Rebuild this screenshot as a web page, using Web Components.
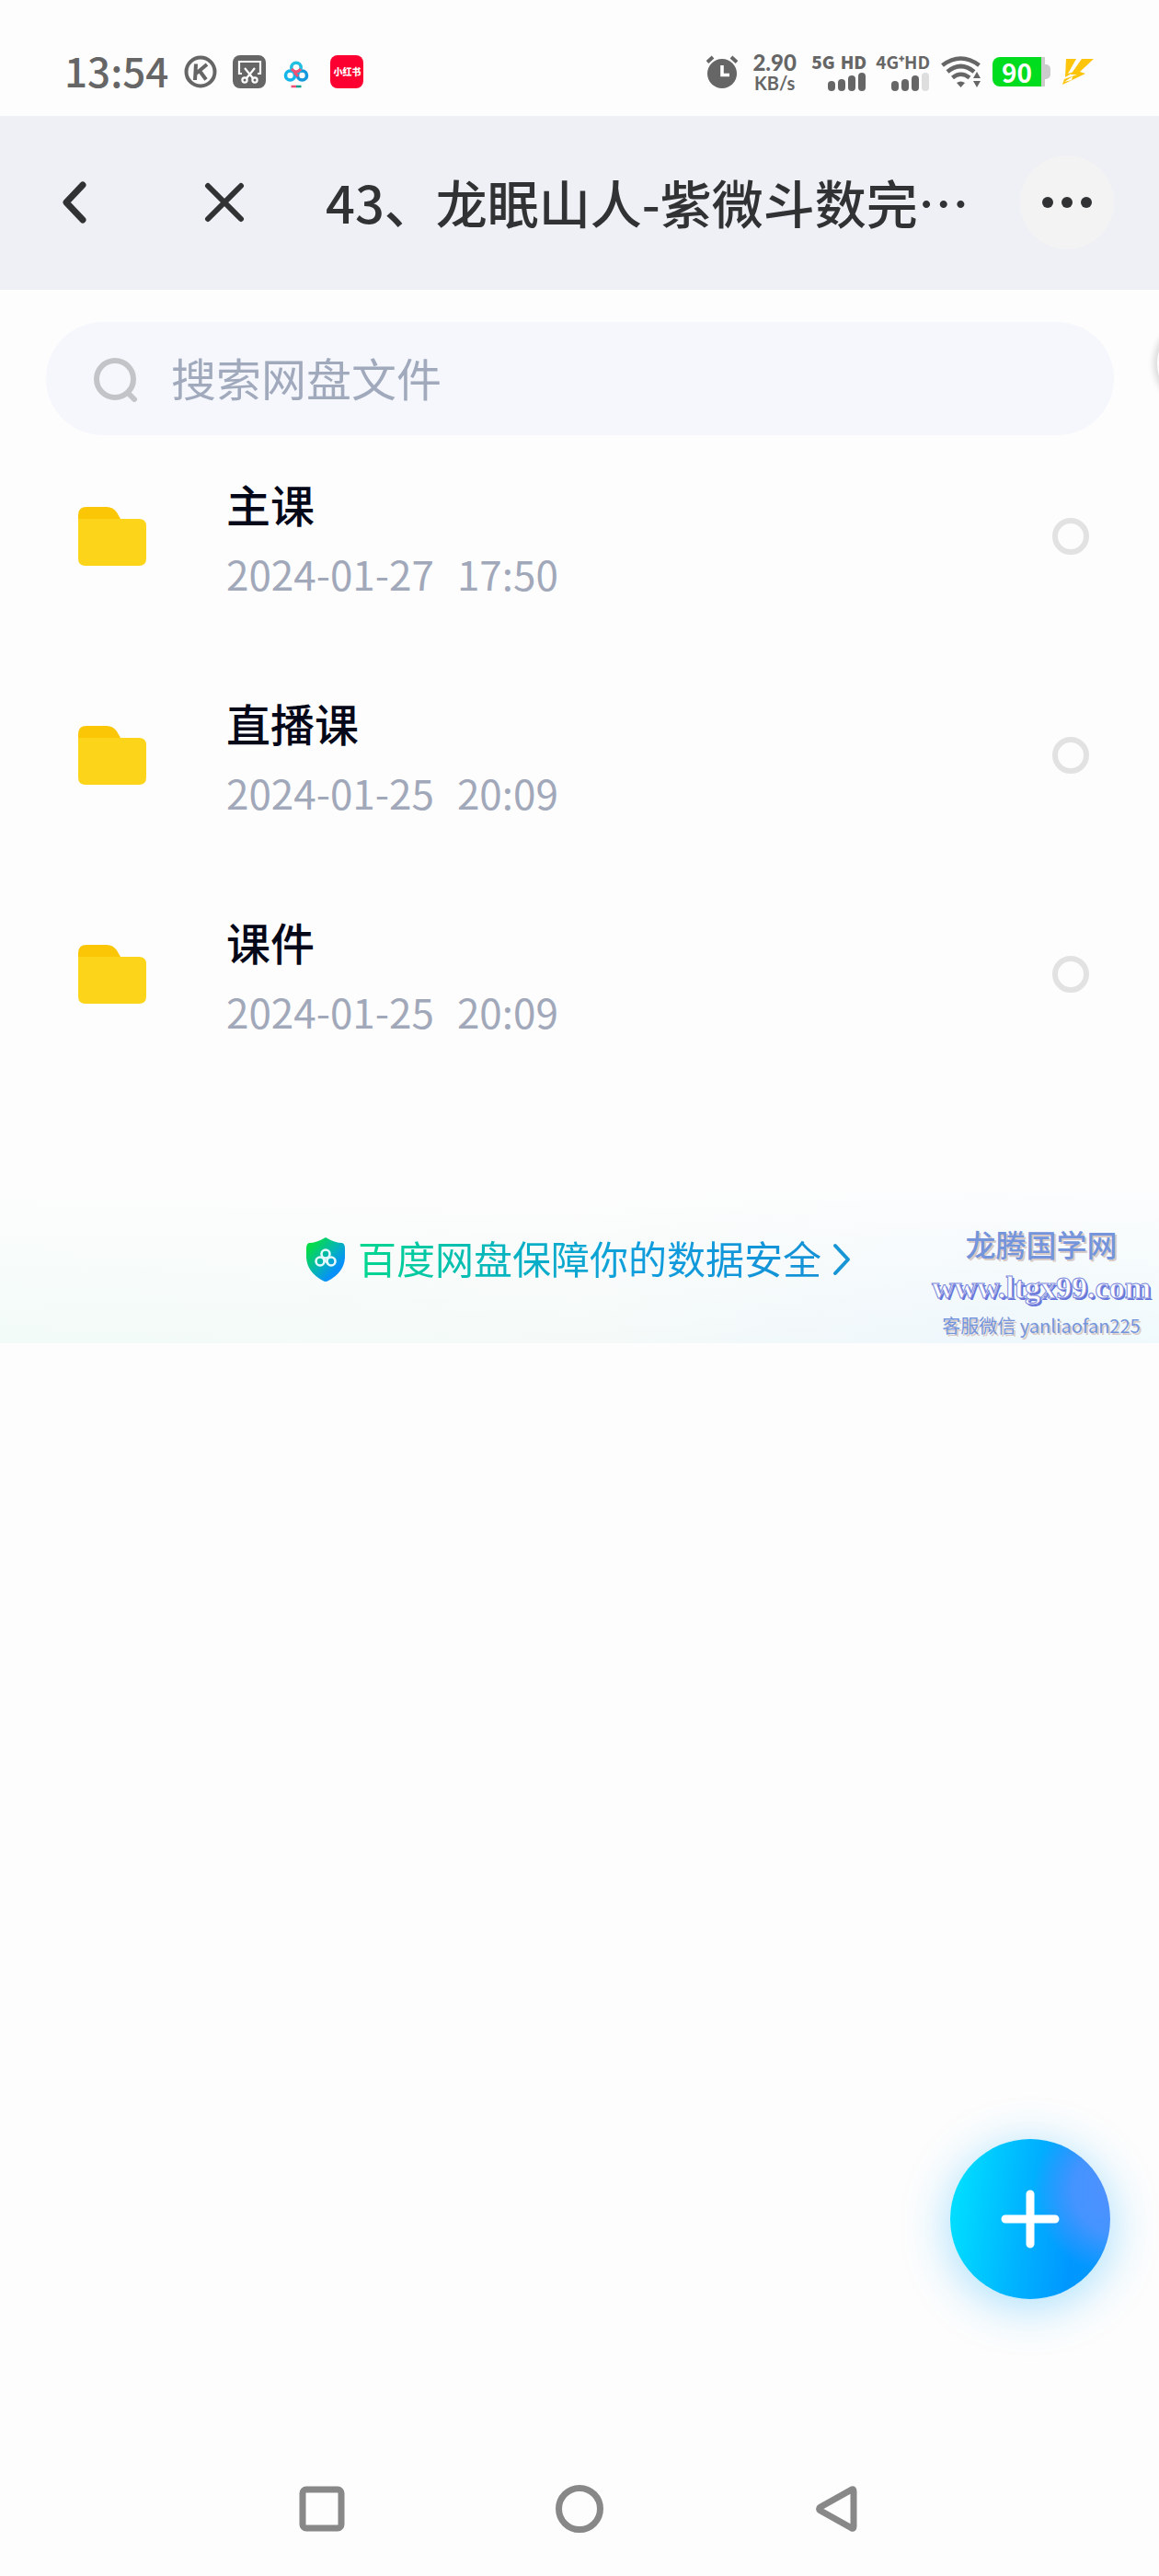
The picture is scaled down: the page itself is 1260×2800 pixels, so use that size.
<!DOCTYPE html>
<html lang="zh-CN">
<head>
<meta charset="utf-8">
<meta name="viewport" content="width=device-width, initial-scale=1">
<title>网盘文件</title>
<style>
  body { margin: 0; background: #fdfdfd; font-family: "Noto Sans CJK SC", sans-serif; }
</style>
</head>
<body>
<disk-app></disk-app>
<script>
const define = (name, html) => {
  const template = document.createElement('template');
  template.innerHTML = html;
  customElements.define(name, class extends HTMLElement {
    constructor() {
      super();
      this.attachShadow({ mode: 'open' }).append(template.content.cloneNode(true));
    }
  });
};

define('signal-meter', `
<style>
  :host { display: flex; flex-direction: column; align-items: flex-end; gap: 3px; }
  span { display: flex; gap: 6px; font-size: 19px; line-height: 18px; font-weight: 700; }
  svg { display: block; }
  :host([weak]) rect:last-child { fill: #dedede; }
</style>
<span><slot></slot></span>
<svg width="42" height="20" fill="#666" aria-hidden="true">
  <rect x="0" y="9" width="8" height="11" rx="4"/><rect x="11" y="7" width="8" height="13" rx="4"/>
  <rect x="22" y="3" width="8" height="17" rx="4"/><rect x="33" y="0" width="8" height="20" rx="4"/>
</svg>`);

define('status-bar', `
<style>
  :host { display: flex; justify-content: space-between; align-items: center; height: 126px; padding: 30px 68px 0 70px; box-sizing: border-box; color: #666; }
  div { display: flex; align-items: center; }
  .left { gap: 17px; }
  time { font-size: 44px; line-height: 48px; font-weight: 500; padding-bottom: 4px; }
  .right { gap: 12px; }
  .speed { flex-direction: column; min-width: 56px; font-family: Lato, sans-serif; font-weight: 700; }
  .speed b { font-size: 24px; line-height: 24px; }
  .speed i { font-size: 20px; line-height: 20px; font-style: normal; }
  .radios { gap: 10px; }
  svg { display: block; }
  .battery { color: #fff; font-size: 28px; line-height: 32px; font-weight: 700; background: #00dc1e; border-radius: 8px 0 0 8px; border-right: 4px solid #ccc; width: 53px; justify-content: center; height: 32px; }
  .cap { width: 6px; height: 16px; background: #ccc; border-radius: 0 5px 5px 0; }
  .xhs { width: 36px; height: 36px; border-radius: 8px; background: #fb0030; color: #fff; font-size: 10px; line-height: 36px; font-weight: 900; justify-content: center; }
</style>
<div class="left">
  <time>13:54</time>
  <svg width="36" height="36" viewBox="0 0 36 36" fill="none" stroke="#666" aria-hidden="true"><circle cx="18" cy="18" r="15.500" stroke-width="4"/><path d="M13 9.500 12 27M25 10 13 20M17 17l7 9.500" stroke-width="4"/></svg>
  <svg width="36" height="36" viewBox="0 0 36 36" aria-hidden="true"><rect width="36" height="36" rx="8" fill="#666"/><g fill="none" stroke="#fff" stroke-width="2.200"><path d="M10 20H7V7h23v13h-3M13 14l9 11M24 14l-9 11"/><circle cx="13" cy="27" r="2.600"/><circle cx="24" cy="27" r="2.600"/></g></svg>
  <svg width="36" height="36" viewBox="0 0 36 36" fill="none" stroke-width="3.600" aria-hidden="true"><circle cx="9.500" cy="22" r="5" stroke="#13b5ea"/><circle cx="22.500" cy="22" r="5" stroke="#1598dc"/><circle cx="16" cy="13.500" r="5.200" stroke="#21bfe0"/><path d="M11 15q5 6 10 0M14 19l4 4" stroke="#ef5073" stroke-width="3"/><path d="M10.500 34H16" stroke="#f05075" stroke-width="2.500"/><path d="M16 34h5.500" stroke="#12a18e" stroke-width="2.500"/></svg>
  <div class="xhs">小红书</div>
</div>
<div class="right">
  <svg width="34" height="36" viewBox="0 0 34 36" aria-hidden="true"><circle cx="17" cy="20" r="16" fill="#666"/><path d="M1 7.500 7 2M33 7.500 27 2" stroke="#666" stroke-width="4"/><path d="M17 11v10.500h8" fill="none" stroke="#fff" stroke-width="3.600"/></svg>
  <div class="speed"><b>2.90</b><i>KB/s</i></div>
  <div class="radios"><signal-meter><b>5G</b><b>HD</b></signal-meter><signal-meter weak>4G⁺HD</signal-meter></div>
  <svg width="44" height="36" viewBox="0 0 44 36" fill="none" stroke="#666" stroke-width="4.600" aria-hidden="true"><path d="M1.500 11Q21.500-4 41.500 11M7 18Q21.500 6 36 18M12.500 24.500Q21.500 17 31 24.500"/><path d="M17 30q4.500-3 9 0l-4.500 5z" fill="#666" stroke="none"/><path d="m39 18 4 7h-8zM39 35l4-7h-8z" fill="#666" stroke="none"/></svg>
  <div><div class="battery">90</div><div class="cap"></div></div>
  <svg width="38" height="32" viewBox="0 0 38 32" fill="#fcc40a" aria-hidden="true"><path d="M5 2H16L7 18 14 16 4 22zM22 2H35L20 16 26 18 1 30 3 24 17 19H10z"/><path d="m3 27 9-6-1 4z" fill="#fdfdfd"/></svg>
</div>`);

define('title-bar', `
<style>
  :host { display: flex; align-items: center; height: 189px; box-sizing: border-box; padding: 0 49px 2px 54px; background: #eff0f5; color: #303234; }
  button { border: 0; padding: 0; background: none; display: grid; place-items: center; flex: none; width: 56px; height: 64px; }
  .close { margin-left: 106px; }
  h1 { flex: 1; min-width: 0; margin: 0 24px 0 82px; padding-bottom: 2px; font-size: 56px; line-height: 80px; font-weight: 500; white-space: nowrap; overflow: hidden; }
  .more { width: 102px; height: 102px; border-radius: 50%; background: #f3f3f4; }
</style>
<button aria-label="返回"><svg width="56" height="56" fill="none" stroke="#303234" stroke-width="7" stroke-linecap="round" stroke-linejoin="round"><path d="M36 9 18 28 36 47"/></svg></button>
<button class="close" aria-label="关闭"><svg width="56" height="56" fill="none" stroke="#303234" stroke-width="6" stroke-linecap="round"><path d="m10 10 36 36M46 10 10 46"/></svg></button>
<h1><slot></slot></h1>
<button class="more" aria-label="更多"><svg width="60" height="20" fill="#303234"><circle cx="9" cy="10" r="6"/><circle cx="30" cy="10" r="6"/><circle cx="51" cy="10" r="6"/></svg></button>`);

define('search-box', `
<style>
  :host { display: block; margin: 35px 49px 0 50px; }
  label { display: flex; align-items: center; gap: 36px; height: 123px; padding: 0 50px; border-radius: 62px; background: #f5f7fc; }
  input { flex: 1; min-width: 0; border: 0; padding: 0 0 4px; background: none; outline: 0; font: 49px/72px "Noto Sans CJK SC", sans-serif; color: #0a0c1e; }
  input::placeholder { color: #a1aabc; opacity: 1; }
  svg { flex: none; }
</style>
<label><svg width="50" height="50" fill="none" stroke="#c3c4c8" stroke-width="6" stroke-linecap="round" aria-hidden="true"><circle cx="25" cy="25" r="20"/><path d="m39 40 7 7"/></svg>
<input type="search" placeholder="搜索网盘文件" aria-label="搜索网盘文件"></label>`);

define('folder-row', `
<style>
  :host { display: block; }
  label { display: flex; align-items: center; height: 220px; padding: 0 76px 0 85px; }
  svg { flex: none; margin-right: 87px; }
  .text { flex: 1; display: flex; flex-direction: column; gap: 12px; padding-top: 4px; }
  .name { font-size: 48px; line-height: 64px; font-weight: 500; color: #050818; }
  time { display: flex; gap: 25px; font-size: 44px; line-height: 64px; color: #a1a8ba; }
  input { appearance: none; flex: none; margin: 0; width: 40px; height: 40px; border: 6px solid #e2e2e2; border-radius: 50%; }
</style>
<label>
  <svg width="74" height="64" aria-hidden="true"><path d="M0 30V9Q0 0 9 0H31Q38 0 42 6L46 13V30z" fill="#fac605"/><path d="M0 13H66Q74 13 74 21V56Q74 64 66 64H8Q0 64 0 56z" fill="#fcd51b"/></svg>
  <span class="text"><span class="name"><slot name="name"></slot></span><time><slot name="date"></slot><slot name="clock"></slot></time></span>
  <input type="radio" name="folder">
</label>`);

define('safety-banner', `
<style>
  :host { display: flex; justify-content: center; align-items: center; position: relative; height: 182px; margin-top: 109px;
    background: linear-gradient(#fdfdfd, rgba(253,253,253,0)), linear-gradient(90deg, #f2fbf7, #f5faf8 50%, #eef7fc 85%, #f0fafc); }
  a { display: flex; align-items: center; text-decoration: none; }
  span { margin: 0 12px 0 14px; padding-bottom: 4px; font-size: 42px; line-height: 60px; background: linear-gradient(90deg, #00d78e, #08b0c4 35%, #109ddd 60%, #1491d6); -webkit-background-clip: text; background-clip: text; color: transparent; }
</style>
<a href="#safety">
  <svg width="42" height="48" aria-hidden="true"><defs><linearGradient id="g" x1="0" y1="0" x2="1" y2="1"><stop offset=".15" stop-color="#06dc48"/><stop offset=".5" stop-color="#05b4b8"/><stop offset=".75" stop-color="#0790f8"/></linearGradient></defs><path d="M21 0Q31 6 39 6 42 7 42 12V22Q41 38 24 47 21 49 18 47 1 38 0 22V12Q0 7 3 6 11 6 21 0z" fill="url(#g)"/><g fill="none" stroke="#e5faff" stroke-width="2.600"><circle cx="21" cy="18" r="4.500"/><circle cx="15" cy="26" r="4.500"/><circle cx="27" cy="26" r="4.500"/><path d="m18 22 6 7"/></g></svg>
  <span>百度网盘保障你的数据安全</span>
  <svg width="22" height="36" fill="none" stroke="#1795d5" stroke-width="4" stroke-linecap="round" stroke-linejoin="round" aria-hidden="true"><path d="m3 3 14 15L3 33"/></svg>
</a>
<slot></slot>`);

define('site-mark', `
<style>
  :host { position: absolute; right: 9px; bottom: 0; display: flex; flex-direction: column; align-items: center; color: #7494dc; text-shadow: 2px 2px #d8cac6; }
  b { font-size: 33px; line-height: 52px; font-weight: 500; }
  a { font: 700 34px/44px "Liberation Serif", serif; color: #fff; text-decoration: none; -webkit-text-stroke: 1px #7c88dc; text-shadow: 2px 2px #6675da; }
  small { font-size: 20px; line-height: 38px; }
</style>
<b>龙腾国学网</b><a href="#site">www.ltgx99.com</a><small>客服微信 yanliaofan225</small>`);

define('add-button', `
<style>
  :host { position: fixed; right: 53px; bottom: 301px; }
  button { display: grid; place-items: center; width: 174px; height: 174px; padding: 0; border: 0; border-radius: 50%;
    background: radial-gradient(circle at 104% 32%, #5090ff 0, #4494ff 22%, rgba(40,150,255,0) 42%), linear-gradient(98deg, #00dcff 8%, #00b4ff 45%, #0098ff 75%);
    box-shadow: 0 8px 48px 4px rgba(30,175,255,.34); }
</style>
<button aria-label="添加"><svg width="64" height="64" stroke="#fff" stroke-width="9" stroke-linecap="round"><path d="M32 5V59M5 32H59"/></svg></button>`);

define('edge-handle', `
<style>
  :host { position: absolute; right: -88px; top: 350px; width: 90px; height: 90px; border-radius: 50%; background: #fdfdfd; box-shadow: 0 0 6px 4px #dcdcdc; }
</style>`);

define('nav-bar', `
<style>
  :host { display: flex; justify-content: center; margin-top: auto; height: 146px; }
  button { width: 280px; padding: 0; border: 0; background: none; display: grid; place-items: center; }
  svg { fill: none; stroke: #888; stroke-width: 7; stroke-linejoin: round; }
</style>
<button aria-label="最近任务"><svg width="56" height="56"><rect x="7" y="7" width="42" height="42" rx="4"/></svg></button>
<button aria-label="主页"><svg width="56" height="56"><circle cx="28" cy="28" r="22.500"/></svg></button>
<button aria-label="返回"><svg width="56" height="56"><path d="M10 26 44 7Q46 6 46 9V47Q46 50 44 49L10 30Q7 28 10 26z"/></svg></button>`);

define('disk-app', `
<style>
  :host { display: flex; flex-direction: column; min-height: 100vh; position: relative; overflow: hidden; }
  main { display: flex; flex-direction: column; }
  .list { display: flex; flex-direction: column; gap: 18px; }
</style>
<status-bar></status-bar>
<title-bar>43、龙眠山人-紫微斗数完…</title-bar>
<main>
  <search-box></search-box>
  <div class="list">
    <folder-row><span slot="name">主课</span><span slot="date">2024-01-27</span><span slot="clock">17:50</span></folder-row>
    <folder-row><span slot="name">直播课</span><span slot="date">2024-01-25</span><span slot="clock">20:09</span></folder-row>
    <folder-row><span slot="name">课件</span><span slot="date">2024-01-25</span><span slot="clock">20:09</span></folder-row>
  </div>
  <safety-banner><site-mark></site-mark></safety-banner>
</main>
<edge-handle></edge-handle>
<add-button></add-button>
<nav-bar></nav-bar>`);
</script>
</body>
</html>
